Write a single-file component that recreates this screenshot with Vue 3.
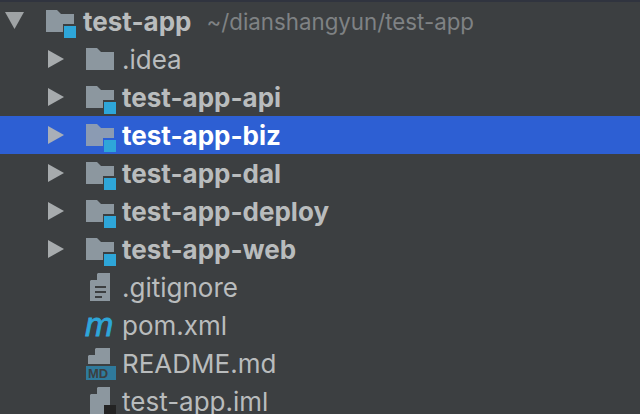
<template>
  <div class="tree">
    <div
      v-for="row in rows"
      :key="row.name"
      class="row"
      :class="{ selected: row.selected, root: row.root }"
    >
      <span class="arrow">
        <svg v-if="row.arrow === 'open'" width="20" height="18" viewBox="0 0 20 18">
          <polygon points="0,0 19,0 9.5,17" fill="#9fa3a5" />
        </svg>
        <svg v-else-if="row.arrow === 'closed'" width="17" height="18" viewBox="0 0 17 18">
          <polygon points="0,0 16,9 0,18" :fill="row.selected ? '#a9afb8' : '#a7abad'" />
        </svg>
      </span>

      <svg class="icon" width="32" height="38" viewBox="0 0 32 38">
        <template v-if="row.icon === 'folder' || row.icon === 'module'">
          <path d="M1 8h11l4 4h13v18H1z" :fill="row.selected ? '#8b9bb3' : '#8c979f'" />
          <template v-if="row.icon === 'module'">
            <rect x="18" y="22" width="14" height="14" :fill="row.selected ? '#2b5fd6' : '#3c3f41'" />
            <rect x="19" y="24" width="12" height="12" fill="#2ea6d9" />
          </template>
        </template>

        <template v-else-if="row.icon === 'ignore'">
          <path d="M13 5h12v28H5V13z" fill="#8c979f" />
          <path d="M5 12l7-7v7z" fill="#3c3f41" />
          <path d="M10 18h11v2H10zM10 23h11v2H10zM10 28h7v2h-7z" fill="#3c3f41" />
        </template>

        <text v-else-if="row.icon === 'maven'" class="maven" x="0" y="30">m</text>

        <template v-else-if="row.icon === 'md'">
          <path d="M11 4h14v16H3v-8z" fill="#8c979f" />
          <path d="M3 11l7-7v7z" fill="#3c3f41" />
          <rect x="1" y="22" width="30" height="14" fill="#2f7a9c" />
          <text class="md" x="3" y="34">MD</text>
        </template>

        <template v-else-if="row.icon === 'iml'">
          <path d="M13 5h12v33H5V13z" fill="#8c979f" />
          <path d="M5 12l7-7v7z" fill="#3c3f41" />
          <rect x="19" y="23" width="12" height="15" fill="#232323" />
        </template>
      </svg>

      <span class="name" :class="{ bold: row.bold }">{{ row.name }}</span>
      <span v-if="row.path" class="path">{{ row.path }}</span>
    </div>
  </div>
</template>

<script setup>
const rows = [
  { name: 'test-app', path: '~/dianshangyun/test-app', arrow: 'open', icon: 'module', bold: true, root: true },
  { name: '.idea', arrow: 'closed', icon: 'folder' },
  { name: 'test-app-api', arrow: 'closed', icon: 'module', bold: true },
  { name: 'test-app-biz', arrow: 'closed', icon: 'module', bold: true, selected: true },
  { name: 'test-app-dal', arrow: 'closed', icon: 'module', bold: true },
  { name: 'test-app-deploy', arrow: 'closed', icon: 'module', bold: true },
  { name: 'test-app-web', arrow: 'closed', icon: 'module', bold: true },
  { name: '.gitignore', icon: 'ignore' },
  { name: 'pom.xml', icon: 'maven' },
  { name: 'README.md', icon: 'md' },
  { name: 'test-app.iml', icon: 'iml' },
];
</script>

<style>
html,
body {
  margin: 0;
  background: #3c3f41;
}
</style>

<style scoped>
.tree {
  width: 640px;
  height: 414px;
  overflow: hidden;
  box-sizing: border-box;
  background: #3c3f41;
  border-top: 2px solid #30343f;
  font-family: Inter, "Liberation Sans", sans-serif;
  font-size: 26px;
  color: #b9bcbd;
}

.row {
  display: flex;
  align-items: center;
  height: 38px;
  padding-left: 48px;
}

.row.root {
  padding-left: 5px;
}

.row.selected {
  background: #2d5fd3;
  color: #fff;
}

.arrow {
  display: flex;
  width: 37px;
  flex: none;
}

.root .arrow {
  width: 40px;
}

.icon {
  flex: none;
  overflow: visible;
}

.name {
  margin-left: 5px;
  white-space: nowrap;
}

.root .name {
  margin-left: 6px;
}

.bold {
  font-weight: 700;
}

.path {
  margin-left: 15px;
  font-size: 22.3px;
  color: #7f8284;
  white-space: nowrap;
}

.maven {
  font-family: "Liberation Sans", Arial, sans-serif;
  font-size: 34px;
  font-style: italic;
  fill: #2ea6d9;
  stroke: #2ea6d9;
  stroke-width: 0.8px;
}

.md {
  font-family: "Liberation Sans", Arial, sans-serif;
  font-size: 13px;
  font-weight: 700;
  fill: #3c3f41;
}
</style>
